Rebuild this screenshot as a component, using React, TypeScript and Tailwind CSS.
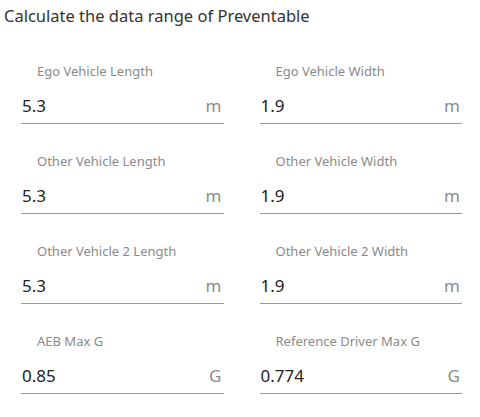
const font = { fontFamily: '"Noto Sans", "Noto Sans CJK JP", sans-serif' };

type Field = { label: string; value: string; unit: string };

const fields: Field[] = [
  { label: 'Ego Vehicle Length', value: '5.3', unit: 'm' },
  { label: 'Ego Vehicle Width', value: '1.9', unit: 'm' },
  { label: 'Other Vehicle Length', value: '5.3', unit: 'm' },
  { label: 'Other Vehicle Width', value: '1.9', unit: 'm' },
  { label: 'Other Vehicle 2 Length', value: '5.3', unit: 'm' },
  { label: 'Other Vehicle 2 Width', value: '1.9', unit: 'm' },
  { label: 'AEB Max G', value: '0.85', unit: 'G' },
  { label: 'Reference Driver Max G', value: '0.774', unit: 'G' },
];

function NumberField({ label, value, unit }: Field) {
  return (
    <div className="flex flex-col h-[90px]">
      <div className="pl-4 pt-[14px] h-[40px] text-[13px] leading-[18px] text-[#8a8a8a]">{label}</div>
      <div className="flex items-center justify-between h-[36px] border-b border-[#9a9a9a] pl-px pr-0.5">
        <span className="text-[17px] text-[#222]">{value}</span>
        <span className="text-[17px] text-[#8c8c8c]">{unit}</span>
      </div>
    </div>
  );
}

export default function App() {
  return (
    <div className="w-[480px] h-[417px] bg-white overflow-hidden" style={font}>
      <div className="pl-[4px] pt-[4px] h-[48px] text-[16.5px] leading-[24px] text-[#333]">
        Calculate the data range of Preventable
      </div>
      <div className="grid grid-cols-2 gap-x-9 pl-[21px] pr-[18px]">
        {fields.map((f) => (
          <NumberField key={f.label} {...f} />
        ))}
      </div>
    </div>
  );
}
